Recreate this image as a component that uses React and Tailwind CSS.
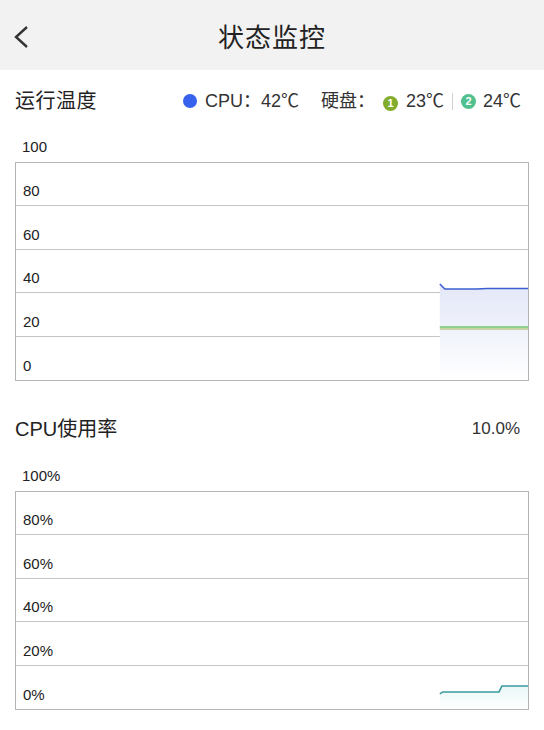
import React from "react";

const FONT = { fontFamily: '"Liberation Sans", "Noto Sans CJK SC", sans-serif' };

function ChartBox({ labels, children }) {
  return (
    <div className="mx-[15px]">
      <div className="h-[20px] pl-[7px] text-[15px] leading-[20px] text-[#222]">{labels[0]}</div>
      <div className="relative mt-[5px] border border-[#b4b4b4]">
        {labels.slice(1).map((l, i) => (
          <div
            key={i}
            className={`h-[43.4px] flex items-end pl-[7px] pb-[4px] text-[15px] leading-[20px] text-[#222] ${
              i < labels.length - 2 ? "border-b border-[#c4c4c4]" : ""
            }`}
          >
            {l}
          </div>
        ))}
        {children}
      </div>
    </div>
  );
}

function Circled({ n, color }) {
  return (
    <span
      className="inline-flex items-center justify-center w-[15px] h-[15px] rounded-full text-white text-[11px] font-bold leading-none"
      style={{ backgroundColor: color }}
    >
      {n}
    </span>
  );
}

export default function App() {
  return (
    <div className="w-[544px] h-[730px] bg-white overflow-hidden" style={FONT}>
      <div className="h-[70px] bg-[#f2f2f2] relative flex items-center justify-center">
        <svg className="absolute left-[12px] top-[25px]" width="20" height="24" viewBox="0 0 20 24">
          <polyline points="15,2 4,12 15,22" fill="none" stroke="#333" strokeWidth="2.4" strokeLinejoin="miter" />
        </svg>
        <div className="text-[26px] text-[#222] tracking-[1px] mt-[6px]">状态监控</div>
      </div>

      <div className="h-[62px] px-[15px] flex items-center justify-between">
        <div className="text-[20px] text-[#222] tracking-[0.5px]">运行温度</div>
        <div className="flex items-center text-[18px] text-[#333] pr-[8px]">
          <span className="w-[14px] h-[14px] rounded-full bg-[#3861ee] mr-[8px]" />
          <span>CPU：42℃</span>
          <span className="ml-[22px]">硬盘：</span>
          <span className="ml-[8px] mr-[8px]"><Circled n="1" color="#82ac2b" /></span>
          <span>23℃</span>
          <span className="mx-[8px] w-px h-[17px] bg-[#d0d0d0]" />
          <Circled n="2" color="#52c08e" />
          <span className="ml-[7px]">24℃</span>
        </div>
      </div>

      <div className="mt-[5px]">
        <ChartBox labels={["100", "80", "60", "40", "20", "0"]}>
          <svg className="absolute inset-0 w-full h-full" viewBox="0 0 511 217" preserveAspectRatio="none">
            <defs>
              <linearGradient id="tg" x1="0" y1="0" x2="0" y2="1">
                <stop offset="0" stopColor="#e3e7f8" />
                <stop offset="1" stopColor="#ffffff" />
              </linearGradient>
            </defs>
            <path d="M423,121 L428,126 L511,126 L511,217 L423,217 Z" fill="url(#tg)" />
            <polyline points="423,121 428,126 460,126 470,125.5 511,125.5" fill="none" stroke="#3b5fd0" strokeWidth="1.6" />
            <line x1="423" y1="164" x2="511" y2="164" stroke="#6cc46c" strokeWidth="1.6" />
            <line x1="423" y1="166" x2="511" y2="166" stroke="#9fb64a" strokeWidth="1" />
          </svg>
        </ChartBox>
      </div>

      <div className="h-[62px] mt-[17px] px-[15px] flex items-center justify-between">
        <div className="text-[20px] text-[#222]">CPU使用率</div>
        <div className="text-[17px] text-[#333] pr-[9px]">10.0%</div>
      </div>

      <div className="mt-[6px]">
        <ChartBox labels={["100%", "80%", "60%", "40%", "20%", "0%"]}>
          <svg className="absolute inset-0 w-full h-full" viewBox="0 0 511 217" preserveAspectRatio="none">
            <defs>
              <linearGradient id="cg" x1="0" y1="0" x2="0" y2="1">
                <stop offset="0" stopColor="#eaf6f6" />
                <stop offset="1" stopColor="#ffffff" />
              </linearGradient>
            </defs>
            <path d="M423,202 L426,200 L482,200 L485,194 L511,194 L511,217 L423,217 Z" fill="url(#cg)" />
            <polyline points="423,202 426,200 482,200 485,194 511,194" fill="none" stroke="#3a9a9c" strokeWidth="1.6" />
          </svg>
        </ChartBox>
      </div>
    </div>
  );
}
